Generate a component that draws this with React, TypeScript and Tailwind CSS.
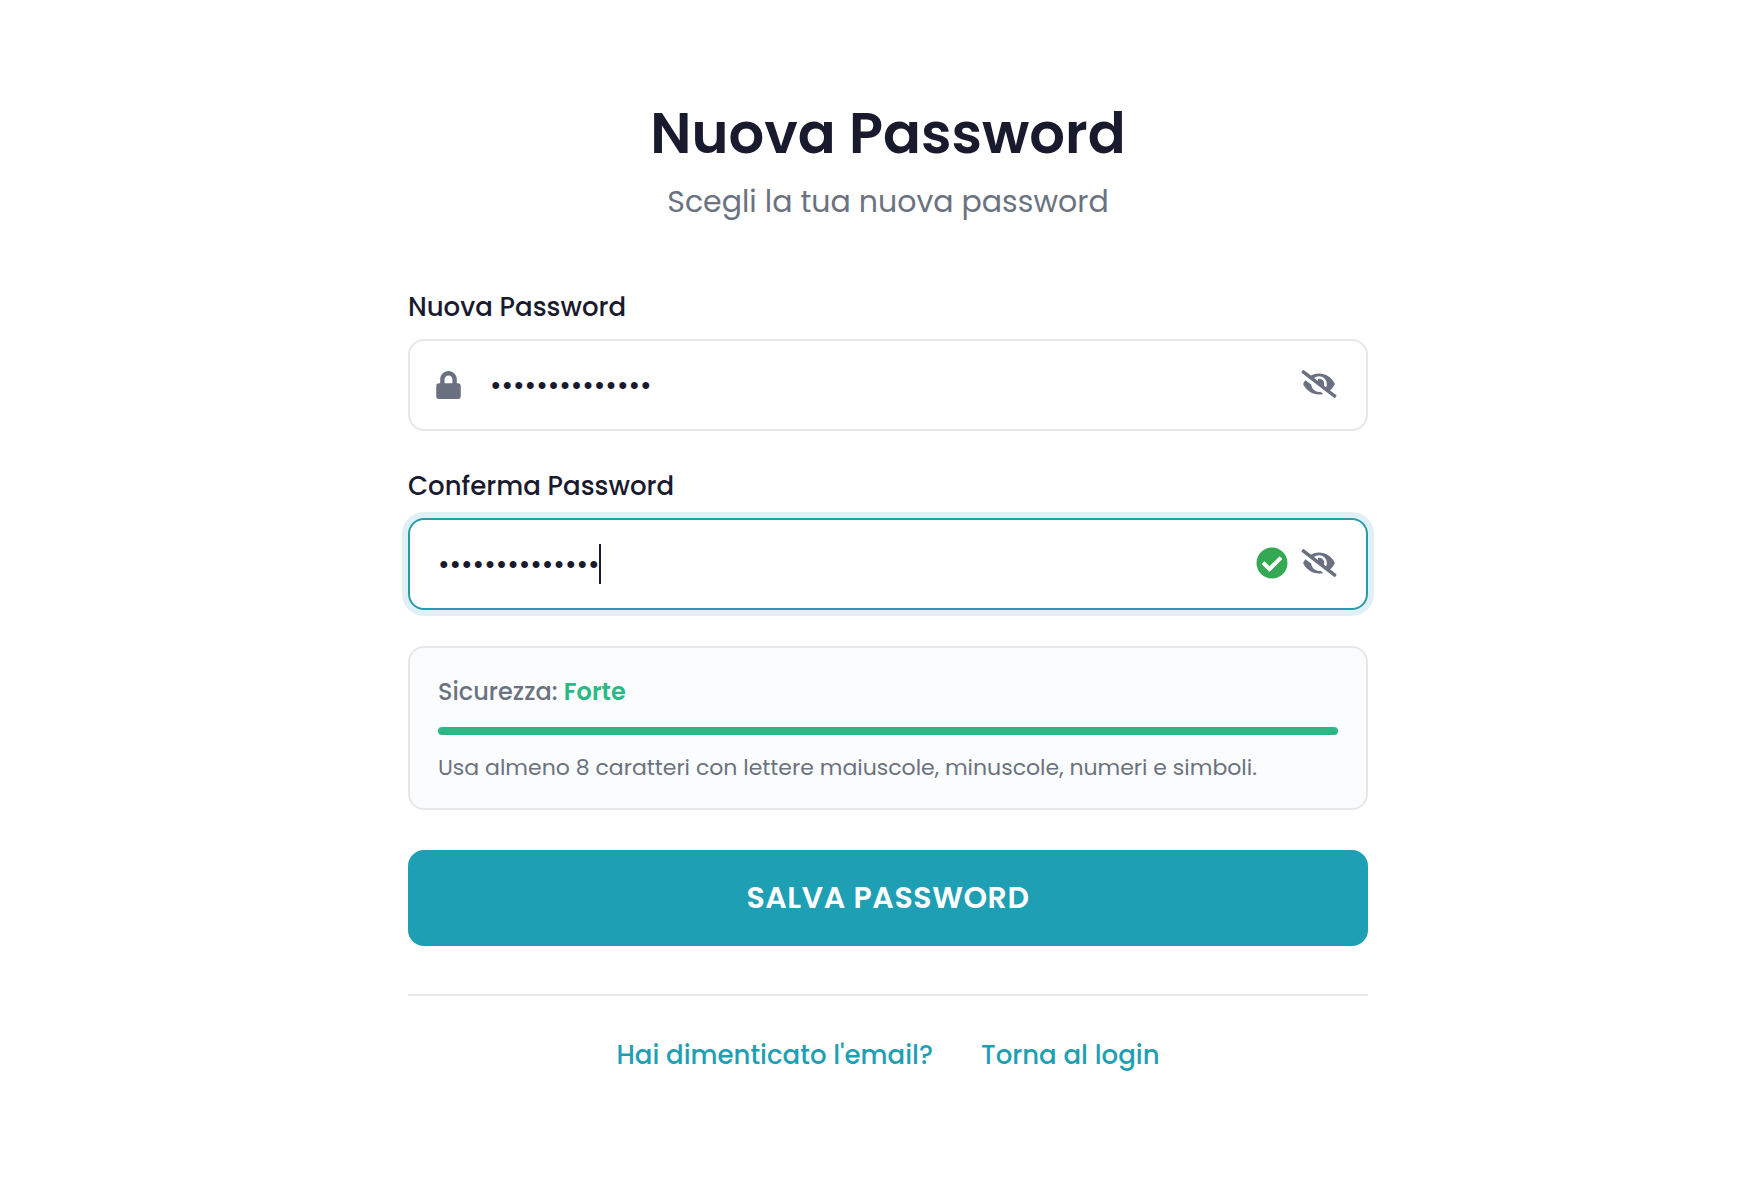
import { useState } from "react";
import type { ReactNode } from "react";
import { FaCheckCircle, FaEye, FaEyeSlash, FaLock } from "react-icons/fa";

type FieldProps = {
  id: string;
  label: string;
  value: string;
  onChange: (value: string) => void;
  focused?: boolean;
  leading?: ReactNode;
  trailing?: ReactNode;
};

function PasswordField({ id, label, value, onChange, focused = false, leading, trailing }: FieldProps) {
  const [visible, setVisible] = useState(false);
  const border = focused ? "border-[#2a9bab] shadow-[0_0_0_6px_#dff1f4]" : "border-[#e5e7e9]";
  const inset = leading ? "pl-[26px]" : "pl-7";
  return (
    <div className="flex flex-col gap-3">
      <label htmlFor={id} className="text-[26px] leading-10 font-medium text-[#1a1a2e]">
        {label}
      </label>
      <div className={`flex h-[92px] items-center rounded-2xl border-2 bg-white pr-[29px] ${border} ${inset}`}>
        {leading}
        <div className="relative min-w-0 flex-1">
          <input
            id={id}
            type={visible ? "text" : "password"}
            value={value}
            onChange={(e) => onChange(e.target.value)}
            className="block h-10 w-full bg-transparent pt-0.5 text-[28px] text-[#1a1a2e] outline-none"
          />
          {focused && <span className="absolute top-0 left-[161px] h-10 w-0.5 bg-[#1a1a2e]" />}
        </div>
        <div className="flex items-center gap-[13px] pb-0.5">
          {trailing}
          <button
            type="button"
            aria-label={visible ? "Nascondi password" : "Mostra password"}
            onClick={() => setVisible(!visible)}
            className="text-[#6b7080]"
          >
            {visible ? <FaEye className="h-7 w-9" /> : <FaEyeSlash className="h-7 w-9" />}
          </button>
        </div>
      </div>
    </div>
  );
}

export default function App() {
  const [password, setPassword] = useState("Password123!ab");
  const [confirm, setConfirm] = useState("Password123!ab");

  return (
    <main className="min-h-screen bg-white px-6 pt-24 pl-9 font-[Poppins,Inter,sans-serif]">
      <form className="mx-auto flex w-full max-w-[960px] flex-col" onSubmit={(e) => e.preventDefault()}>
        <header className="text-center">
          <h1 className="text-[56px] leading-[76px] font-semibold text-[#1a1a2e]">Nuova Password</h1>
          <p className="mt-2 text-[30px] leading-[44px] text-[#6b7280]">Scegli la tua nuova password</p>
        </header>

        <div className="mt-[63px] flex flex-col gap-[35px]">
          <PasswordField
            id="new-password"
            label="Nuova Password"
            value={password}
            onChange={setPassword}
            leading={<FaLock className="mr-[29px] h-7 w-[25px] shrink-0 text-[#6b7080]" aria-hidden="true" />}
          />
          <PasswordField
            id="confirm-password"
            label="Conferma Password"
            value={confirm}
            onChange={setConfirm}
            focused
            trailing={<FaCheckCircle className="size-8 text-[#34a853]" aria-hidden="true" />}
          />
        </div>

        <section className="mt-9 rounded-2xl border-2 border-[#e5e7e9] bg-[#fafcfd] px-7 py-6">
          <p className="text-2xl leading-10 font-medium text-[#6b7280]">
            Sicurezza: <strong className="font-semibold text-[#2ab885]">Forte</strong>
          </p>
          <div className="mt-[15px] h-2 rounded-full bg-[#2ab885]" />
          <p className="mt-4 text-[22px] leading-[33px] text-[#6b7280]">
            Usa almeno 8 caratteri con lettere maiuscole, minuscole, numeri e simboli.
          </p>
        </section>

        <button
          type="submit"
          className="mt-10 h-24 rounded-2xl bg-[#1e9fb4] pb-0.5 text-[30px] font-semibold tracking-[0.02em] text-white"
        >
          SALVA PASSWORD
        </button>

        <nav className="mt-12 flex justify-center gap-12 border-t-2 border-[#e5e7e9] pt-[39px] text-[26px] leading-10 font-medium text-[#1e9fb4]">
          <a href="#email">Hai dimenticato l'email?</a>
          <a href="#login">Torna al login</a>
        </nav>
      </form>
    </main>
  );
}
